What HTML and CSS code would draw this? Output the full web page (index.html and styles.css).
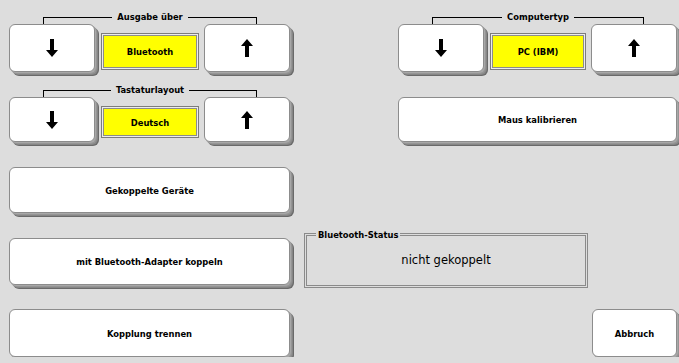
FILE: index.html
```html
<!DOCTYPE html>
<html lang="de">
<head>
    <meta charset="UTF-8" />
    <title>Einstellungen</title>
    <link rel="stylesheet" href="styles.css">
</head>
<body>
    <div class="panel">
        <div class="group group-out">
            <div class="bracket"><span>Ausgabe über</span></div>
            <div class="picker">
                <button class="key arrow" type="button">
                    <svg width="12" height="18" viewBox="0 0 12 18"><path d="M4 0h4v11h4l-6 7-6-7h4z"/></svg>
                </button>
                <div class="value">Bluetooth</div>
                <button class="key arrow" type="button">
                    <svg width="12" height="18" viewBox="0 0 12 18"><path d="M6 0l6 7h-4v11h-4v-11h-4z"/></svg>
                </button>
            </div>
        </div>

        <div class="group group-pc">
            <div class="bracket"><span>Computertyp</span></div>
            <div class="picker">
                <button class="key arrow" type="button">
                    <svg width="12" height="18" viewBox="0 0 12 18"><path d="M4 0h4v11h4l-6 7-6-7h4z"/></svg>
                </button>
                <div class="value">PC (IBM)</div>
                <button class="key arrow" type="button">
                    <svg width="12" height="18" viewBox="0 0 12 18"><path d="M6 0l6 7h-4v11h-4v-11h-4z"/></svg>
                </button>
            </div>
        </div>

        <div class="group group-layout short">
            <div class="bracket"><span>Tastaturlayout</span></div>
            <div class="picker">
                <button class="key arrow" type="button">
                    <svg width="12" height="18" viewBox="0 0 12 18"><path d="M4 0h4v11h4l-6 7-6-7h4z"/></svg>
                </button>
                <div class="value">Deutsch</div>
                <button class="key arrow" type="button">
                    <svg width="12" height="18" viewBox="0 0 12 18"><path d="M6 0l6 7h-4v11h-4v-11h-4z"/></svg>
                </button>
            </div>
        </div>

        <button class="key wide mouse" type="button">Maus kalibrieren</button>
        <button class="key wide paired" type="button">Gekoppelte Geräte</button>
        <button class="key wide pair" type="button">mit Bluetooth-Adapter koppeln</button>

        <fieldset class="status">
            <legend>Bluetooth-Status</legend>
            <div class="status-text">nicht gekoppelt</div>
        </fieldset>

        <button class="key wide unpair" type="button">Kopplung trennen</button>
        <button class="key cancel" type="button">Abbruch</button>
    </div>
</body>
</html>
```

FILE: styles.css
```css
/* settings panel, fixed 679x363 */
body {
    margin: 0;
    background: #dddddd;
    font-family: "DejaVu Sans Condensed", "DejaVu Sans", sans-serif;
    color: #000;
}
.panel {
    display: grid;
    grid-template-columns: 281px 14px 94px 190px 89px;
    grid-template-rows: 73px 84px 71px 71px 48px;
    padding: 10px 0 0 9px;
}
.group {
    display: flex;
    flex-direction: column;
    align-self: start;
}
.group-out { grid-column: 1; grid-row: 1; }
.group-pc { grid-column: 4 / 6; grid-row: 1; }
.group-layout { grid-column: 1; grid-row: 2; }

.bracket {
    display: flex;
    height: 14px;
    margin: 0 33px 0 34px;
    font-weight: bold;
    font-size: 9.3px;
    line-height: 14px;
}
.bracket::before,
.bracket::after {
    content: '';
    flex: 1;
    margin-top: 7px;
    border-top: 1px solid #000;
}
.bracket::before { border-left: 1px solid #000; }
.bracket::after { border-right: 1px solid #000; }
.bracket span { padding: 0 5px; }

.picker {
    display: flex;
    height: 48px;
}
.short .picker { height: 45px; }

.key {
    box-sizing: border-box;
    background: #fff;
    border: 1px solid #8c8c8c;
    border-radius: 6px;
    box-shadow: 1px 1px 0 #a8a8a8, 2px 2px 0 #959595, 3px 3px 0 #868686, 4px 4px 0 #6a6a6a;
    font-family: inherit;
    font-weight: bold;
    font-size: 9.3px;
    color: #000;
    padding: 0;
    cursor: pointer;
}
.arrow {
    width: 86px;
    display: flex;
    align-items: center;
    justify-content: center;
}
.arrow svg { display: block; }

.value {
    flex: 1;
    margin: 9px 5px 2px 6px;
    display: flex;
    align-items: center;
    justify-content: center;
    background: #ffff00;
    border: 1px solid #7c7c7c;
    box-shadow: inset 0 0 0 1px #ececec, inset 0 0 0 2px #8c8c8c;
    font-weight: bold;
    font-size: 9.3px;
}
.short .value { margin-bottom: 4px; }

.wide { align-self: start; }
.mouse {
    grid-column: 4 / 6;
    grid-row: 2;
    margin-top: 14px;
    height: 45px;
}
.paired { grid-column: 1; grid-row: 3; height: 46px; }
.pair { grid-column: 1; grid-row: 4; height: 47px; }
.unpair { grid-column: 1; grid-row: 5; height: 48px; }
.cancel {
    grid-column: 5;
    grid-row: 5;
    justify-self: end;
    width: 85px;
    height: 48px;
}

.status {
    grid-column: 3 / 5;
    grid-row: 3 / 5;
    align-self: end;
    margin: 0 0 21px;
    padding: 0;
    height: 59px;
    box-sizing: border-box;
    border: 3px double #8a8a8a;
    display: grid;
    place-items: center;
}
.status legend {
    margin-left: 9px;
    padding: 0 2px;
    font-weight: bold;
    font-size: 9.3px;
}
.status-text {
    font-family: "DejaVu Sans", sans-serif;
    font-size: 11.5px;
    margin-top: -6px;
}
```
